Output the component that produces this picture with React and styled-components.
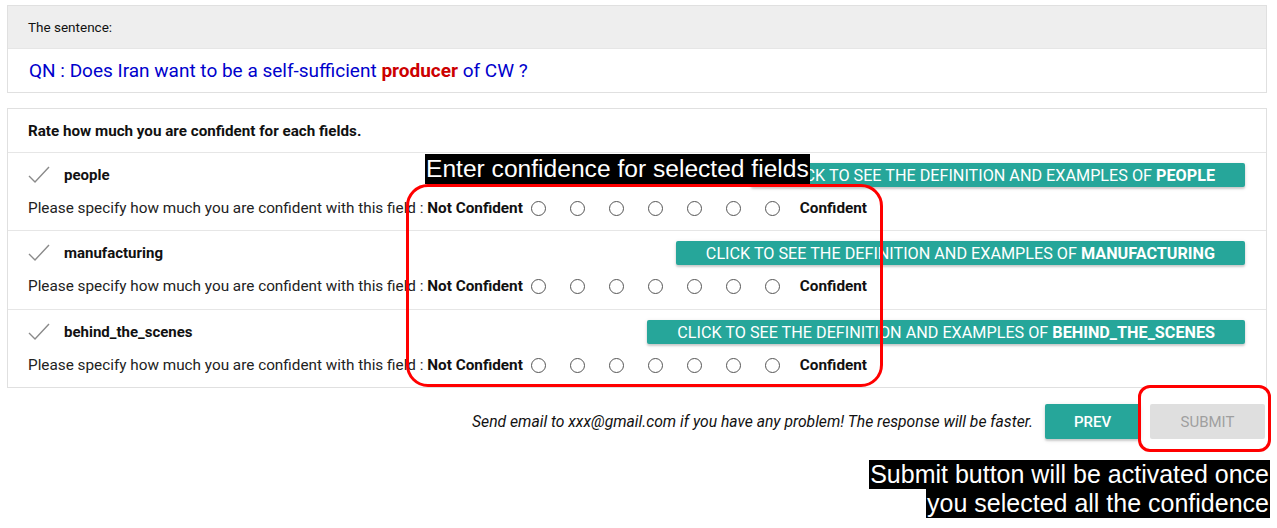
import React from "react";
import styled, { createGlobalStyle } from "styled-components";

const Global = createGlobalStyle`
  html, body { margin: 0; padding: 0; background: #fff; }
  body { font-family: Roboto, "Liberation Sans", Arial, sans-serif; color: #000; }
  *, *::before, *::after { box-sizing: border-box; }
`;

const Page = styled.div`
  position: relative;
  width: 1277px;
  height: 528px;
  padding: 5px 10px 0 7px;
  overflow: hidden;
`;

const Card = styled.section`
  border: 1px solid #e0e0e0;
  background: #fff;
  margin-bottom: ${(p) => p.$mb || 0}px;
`;

const CardHead = styled.div`
  display: flex;
  align-items: center;
  height: ${(p) => p.$h}px;
  padding: 0 20px;
  background: ${(p) => (p.$gray ? "#eeeeee" : "#fff")};
  border-bottom: 1px solid #e6e6e6;
  font-size: ${(p) => p.$size}px;
  font-weight: ${(p) => p.$weight || 400};
  color: #111;
`;

const Sentence = styled.div`
  display: flex;
  align-items: center;
  height: 43px;
  padding: 0 21px;
  font-size: 19px;
  color: #0000cc;
  b { color: #cc0000; font-weight: 700; }
`;

const FieldRow = styled.div`
  display: flex;
  flex-direction: column;
  height: ${(p) => p.$h}px;
  padding: 10px 21px 0 20px;
  border-bottom: ${(p) => (p.$last ? "none" : "1px solid #e6e6e6")};
`;

const TopLine = styled.div`
  display: flex;
  align-items: center;
  height: 24px;
`;

const Check = styled.svg`
  width: 22px;
  height: 18px;
  margin-right: 14px;
  flex: none;
`;

const FieldName = styled.span`
  font-size: 15px;
  font-weight: 700;
  color: #111;
  flex: 1;
`;

const DefButton = styled.button`
  height: 24px;
  padding: 0 30px;
  border: none;
  border-radius: 2px;
  background: #26a69a;
  color: #fff;
  font-family: Roboto, "Liberation Sans", Arial, sans-serif;
  font-size: 16.2px;
  text-transform: uppercase;
  box-shadow: 0 2px 2px rgba(0,0,0,0.14), 0 1px 4px rgba(0,0,0,0.12);
  b { font-weight: 700; }
`;

const ConfLine = styled.div`
  display: flex;
  align-items: center;
  margin-top: 9px;
  height: 24px;
  font-size: 15.3px;
  color: #222;
`;

const Bold = styled.span`
  font-weight: 700;
  color: #111;
`;

const Radios = styled.div`
  display: flex;
  gap: 24px;
  margin: 0 20px 0 8px;
`;

const Radio = styled.span`
  width: 15px;
  height: 15px;
  border: 1.6px solid #555;
  border-radius: 50%;
`;

const Footer = styled.div`
  display: flex;
  justify-content: flex-end;
  align-items: center;
  gap: 10px;
  margin-top: 16px;
  padding-right: 2px;
`;

const Note = styled.span`
  font-size: 15.7px;
  font-style: italic;
  color: #111;
  margin-right: 2px;
`;

const ActionButton = styled.button`
  height: 35px;
  width: ${(p) => p.$w}px;
  border: none;
  border-radius: 2px;
  font-family: Roboto, "Liberation Sans", Arial, sans-serif;
  font-size: 15px;
  font-weight: ${(p) => (p.$disabled ? 400 : 500)};
  text-transform: uppercase;
  background: ${(p) => (p.$disabled ? "#dfdfdf" : "#26a69a")};
  color: ${(p) => (p.$disabled ? "#9f9f9f" : "#fff")};
  box-shadow: ${(p) => (p.$disabled ? "none" : "0 2px 2px rgba(0,0,0,0.14), 0 1px 5px rgba(0,0,0,0.12)")};
`;

const Label = styled.div`
  position: absolute;
  background: #000;
  color: #fff;
  font-family: "Liberation Sans", Arial, sans-serif;
  font-size: 24.6px;
  line-height: ${(p) => p.$lh}px;
  padding: 0 1px;
  white-space: nowrap;
  left: ${(p) => p.$x}px;
  top: ${(p) => p.$y}px;
`;

const StackLabel = styled.div`
  position: absolute;
  right: 7px;
  top: 460px;
  display: flex;
  flex-direction: column;
  align-items: flex-end;
`;

const StackLine = styled.span`
  background: #000;
  color: #fff;
  font-family: "Liberation Sans", Arial, sans-serif;
  font-size: 25px;
  line-height: 29px;
  padding: 0 1px;
  white-space: nowrap;
`;

const Ring = styled.div`
  position: absolute;
  left: ${(p) => p.$x}px;
  top: ${(p) => p.$y}px;
  width: ${(p) => p.$w}px;
  height: ${(p) => p.$h}px;
  border: 3px solid #ff0000;
  border-radius: ${(p) => p.$r}px;
`;

const fields = [
  { name: "people", h: 78 },
  { name: "manufacturing", h: 79 },
  { name: "behind_the_scenes", h: 77 },
];

const CheckIcon = () => (
  <Check viewBox="0 0 22 18">
    <polyline points="1,10 7,16 21,1" fill="none" stroke="#8a8a8a" strokeWidth="1.4" />
  </Check>
);

export default function App() {
  return (
    <Page>
      <Global />
      <Card $mb={15}>
        <CardHead $gray $h={43} $size={13.5}>The sentence:</CardHead>
        <Sentence>
          QN : Does Iran want to be a self-sufficient&nbsp;<b>producer</b>&nbsp;of CW ?
        </Sentence>
      </Card>

      <Card>
        <CardHead $h={44} $size={15.2} $weight={700}>
          Rate how much you are confident for each fields.
        </CardHead>
        {fields.map((f, i) => (
          <FieldRow key={f.name} $h={f.h} $last={i === fields.length - 1}>
            <TopLine>
              <CheckIcon />
              <FieldName>{f.name}</FieldName>
              <DefButton>
                Click to see the definition and examples of <b>{f.name}</b>
              </DefButton>
            </TopLine>
            <ConfLine>
              Please specify how much you are confident with this field :&nbsp;
              <Bold>Not Confident</Bold>
              <Radios>
                {Array.from({ length: 7 }).map((_, k) => (
                  <Radio key={k} />
                ))}
              </Radios>
              <Bold>Confident</Bold>
            </ConfLine>
          </FieldRow>
        ))}
      </Card>

      <Footer>
        <Note>Send email to xxx@gmail.com if you have any problem! The response will be faster.</Note>
        <ActionButton $w={95}>Prev</ActionButton>
        <ActionButton $w={115} $disabled>Submit</ActionButton>
      </Footer>

      <Ring $x={406} $y={184} $w={477} $h={203} $r={22} />
      <Label $x={425} $y={154} $lh={30}>Enter confidence for selected fields</Label>
      <Ring $x={1138} $y={385} $w={133} $h={67} $r={12} />
      <StackLabel>
        <StackLine>Submit button will be activated once</StackLine>
        <StackLine>you selected all the confidence</StackLine>
      </StackLabel>
    </Page>
  );
}
